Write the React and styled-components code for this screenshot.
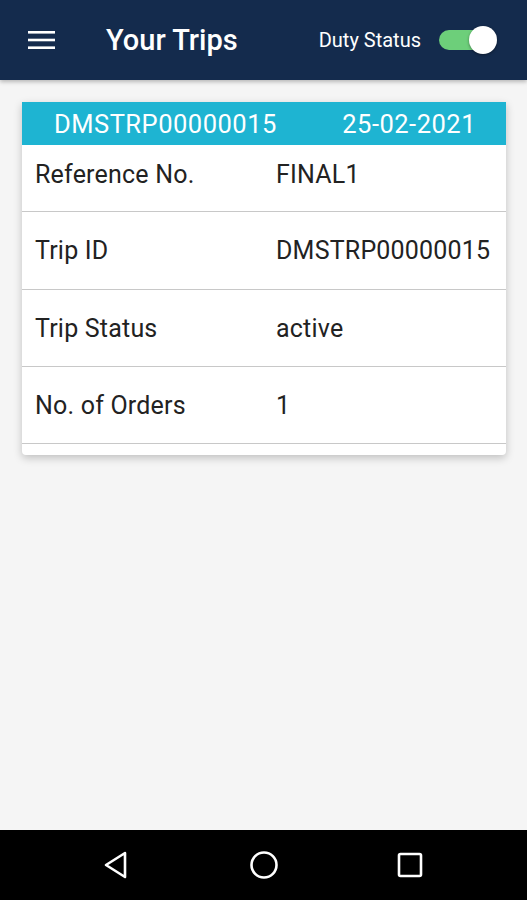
import React from 'react';
import styled, { createGlobalStyle } from 'styled-components';

const Global = createGlobalStyle`
  html, body {
    margin: 0;
    padding: 0;
    background: #f5f5f5;
    font-family: Roboto, "Noto Sans", sans-serif;
  }
  #root { min-height: 100vh; }
`;

const Screen = styled.div`
  height: 900px;
  display: flex;
  flex-direction: column;
  background: #f5f5f5;
`;

const TopBar = styled.header`
  height: 80px;
  background: #142b4d;
  display: flex;
  align-items: center;
  padding: 0 28px 0 28px;
  box-shadow: 0 2px 4px rgba(0,0,0,0.25);
`;

const Menu = styled.svg`
  width: 28px;
  height: 20px;
  flex: none;
`;

const Title = styled.h1`
  margin: 0 0 0 50px;
  color: #fff;
  font-size: 29px;
  font-weight: 500;
  flex: 1;
`;

const DutyLabel = styled.span`
  color: #fff;
  font-size: 20px;
  margin-right: 18px;
`;

const Track = styled.div`
  position: relative;
  width: 46px;
  height: 20px;
  border-radius: 10px;
  background: #6dcf7a;
  margin-right: 14px;
`;

const Thumb = styled.div`
  position: absolute;
  right: -12px;
  top: -4px;
  width: 28px;
  height: 28px;
  border-radius: 50%;
  background: #fff;
  box-shadow: 0 1px 3px rgba(0,0,0,0.4);
`;

const Content = styled.main`
  flex: 1;
  padding: 22px 21px 0 22px;
`;

const Card = styled.section`
  background: #fff;
  border-radius: 0 0 4px 4px;
  box-shadow: 0 3px 8px rgba(0,0,0,0.22);
  padding-bottom: 11px;
`;

const Band = styled.div`
  height: 43px;
  background: #1eb4d2;
  color: #fff;
  font-size: 25.5px;
  letter-spacing: 0.5px;
  display: flex;
  align-items: center;
  justify-content: space-between;
  padding: 0 30px 0 32px;
`;

const Row = styled.div`
  height: ${p => p.h}px;
  border-bottom: 1.5px solid #c8c8c8;
  display: flex;
  align-items: center;
  padding-left: 13px;
  font-size: 25px;
  letter-spacing: 0.2px;
  color: #222;
  padding-bottom: ${p => p.pb || 0}px;
  box-sizing: border-box;
`;

const Label = styled.span`
  width: 241px;
`;

const NavBar = styled.nav`
  height: 70px;
  background: #000;
  display: flex;
  align-items: center;
  justify-content: center;
  gap: 110px;
`;

const NavIcon = styled.svg`
  width: 36px;
  height: 36px;
`;

const rows = [
  ['Reference No.', 'FINAL1', 67, 8],
  ['Trip ID', 'DMSTRP00000015', 78],
  ['Trip Status', 'active', 77],
  ['No. of Orders', '1', 77],
];

export default function App() {
  return (
    <Screen>
      <Global />
      <TopBar>
        <Menu viewBox="0 0 28 20">
          <rect x="0" y="1" width="27" height="2.6" fill="#fff" />
          <rect x="0" y="8.7" width="27" height="2.6" fill="#fff" />
          <rect x="0" y="16.4" width="27" height="2.6" fill="#fff" />
        </Menu>
        <Title>Your Trips</Title>
        <DutyLabel>Duty Status</DutyLabel>
        <Track>
          <Thumb />
        </Track>
      </TopBar>
      <Content>
        <Card>
          <Band>
            <span>DMSTRP00000015</span>
            <span>25-02-2021</span>
          </Band>
          {rows.map(([k, v, h, pb]) => (
            <Row key={k} h={h} pb={pb}>
              <Label>{k}</Label>
              <span>{v}</span>
            </Row>
          ))}
        </Card>
      </Content>
      <NavBar>
        <NavIcon viewBox="0 0 36 36">
          <path d="M25 6 L6 18 L25 30 Z" fill="none" stroke="#fff" strokeWidth="2.6" strokeLinejoin="round" />
        </NavIcon>
        <NavIcon viewBox="0 0 36 36">
          <circle cx="18" cy="18" r="12.5" fill="none" stroke="#fff" strokeWidth="2.6" />
        </NavIcon>
        <NavIcon viewBox="0 0 36 36">
          <rect x="7" y="7" width="22" height="22" rx="1.5" fill="none" stroke="#fff" strokeWidth="2.6" />
        </NavIcon>
      </NavBar>
    </Screen>
  );
}
